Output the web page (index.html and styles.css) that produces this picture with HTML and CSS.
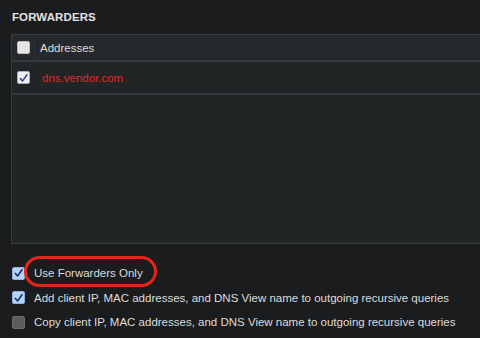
FILE: index.html
```html
<!DOCTYPE html>
<html lang="en">
<head>
  <meta charset="UTF-8" />
  <title>Forwarders</title>
  <link rel="stylesheet" href="styles.css">
</head>
<body>

<div class="section">
  <h3 class="section-title">FORWARDERS</h3>

  <div class="grid">
    <div class="grid-head">
      <div class="cell-check"><span class="box box-plain"></span></div>
      <div class="cell-text">Addresses</div>
    </div>
    <div class="grid-row">
      <div class="cell-check">
        <span class="box box-white">
          <svg viewBox="0 0 12 12" width="12" height="12"><path d="M2.5 6.5 L5 9.2 L9.8 2.5" fill="none" stroke="#2b3f8f" stroke-width="1.6" stroke-linecap="round" stroke-linejoin="round"/></svg>
        </span>
      </div>
      <div class="cell-text addr">dns.vendor.com</div>
    </div>
  </div>

  <div class="options">
    <label class="option">
      <span class="box box-blue">
        <svg viewBox="0 0 12 12" width="12" height="12"><path d="M2.5 6.5 L5 9.2 L9.8 2.5" fill="none" stroke="#15366e" stroke-width="1.8" stroke-linecap="round" stroke-linejoin="round"/></svg>
      </span>
      <span class="circled">Use Forwarders Only</span>
    </label>
    <label class="option">
      <span class="box box-blue">
        <svg viewBox="0 0 12 12" width="12" height="12"><path d="M2.5 6.5 L5 9.2 L9.8 2.5" fill="none" stroke="#15366e" stroke-width="1.8" stroke-linecap="round" stroke-linejoin="round"/></svg>
      </span>
      <span>Add client IP, MAC addresses, and DNS View name to outgoing recursive queries</span>
    </label>
    <label class="option">
      <span class="box box-grey"></span>
      <span>Copy client IP, MAC addresses, and DNS View name to outgoing recursive queries</span>
    </label>
  </div>
</div>

</body>
</html>
```

FILE: styles.css
```css
body {
  margin: 0;
  background: #1b1c1e;
  font-family: "Liberation Sans", Arial, sans-serif;
  color: #dcdcdc;
  overflow: hidden;
}

.section {
  padding: 10px 0 0 11px;
}

.section-title {
  margin: 0 0 10px 1px;
  font-size: 11.5px;
  font-weight: bold;
  letter-spacing: 0.1px;
  color: #e2e2e2;
  line-height: 14px;
}

.grid {
  width: 480px;
  height: 210px;
  background: #222526;
  border: 1px solid #3a3d3f;
  border-right: none;
  box-sizing: border-box;
}

.grid-head,
.grid-row {
  display: flex;
  align-items: center;
}

.grid-head {
  height: 25px;
  background: #26292b;
  border-bottom: 2px solid #383b3d;
}

.grid-row {
  height: 31px;
  border-bottom: 2px solid #35383a;
}

.cell-check {
  width: 21px;
  display: flex;
  justify-content: center;
  padding-left: 1px;
}

.grid-head .cell-check {
  border-right: 1px solid #303335;
  height: 25px;
  align-items: center;
}

.cell-text {
  font-size: 11.5px;
  padding-left: 5px;
}

.addr {
  color: #e3262b;
  padding-left: 8px;
}

.box {
  width: 13px;
  height: 13px;
  box-sizing: border-box;
  border-radius: 2px;
  display: inline-flex;
  align-items: center;
  justify-content: center;
  flex-shrink: 0;
}

.box-plain {
  background: #e4e4e4;
  border: 1px solid #bdbdbd;
}

.box-white {
  background: #eef0f4;
  border: 1px solid #a9acb2;
}

.box-blue {
  background: #b8d2f5;
  border: 1px solid #8fb0dd;
}

.box-grey {
  background: #5a5c5e;
  border: 1px solid #6a6c6e;
}

.options {
  display: flex;
  flex-direction: column;
  gap: 10.5px;
  margin-top: 22px;
  padding-left: 1px;
}

.option {
  display: flex;
  align-items: center;
  gap: 9px;
  font-size: 11.5px;
  line-height: 14px;
  color: #dcdcdc;
}

.circled {
  position: relative;
}

.circled::after {
  content: "";
  position: absolute;
  left: -10px;
  right: -14px;
  top: -10px;
  bottom: -7px;
  border: 3px solid #e4261a;
  border-radius: 16px;
}
```
